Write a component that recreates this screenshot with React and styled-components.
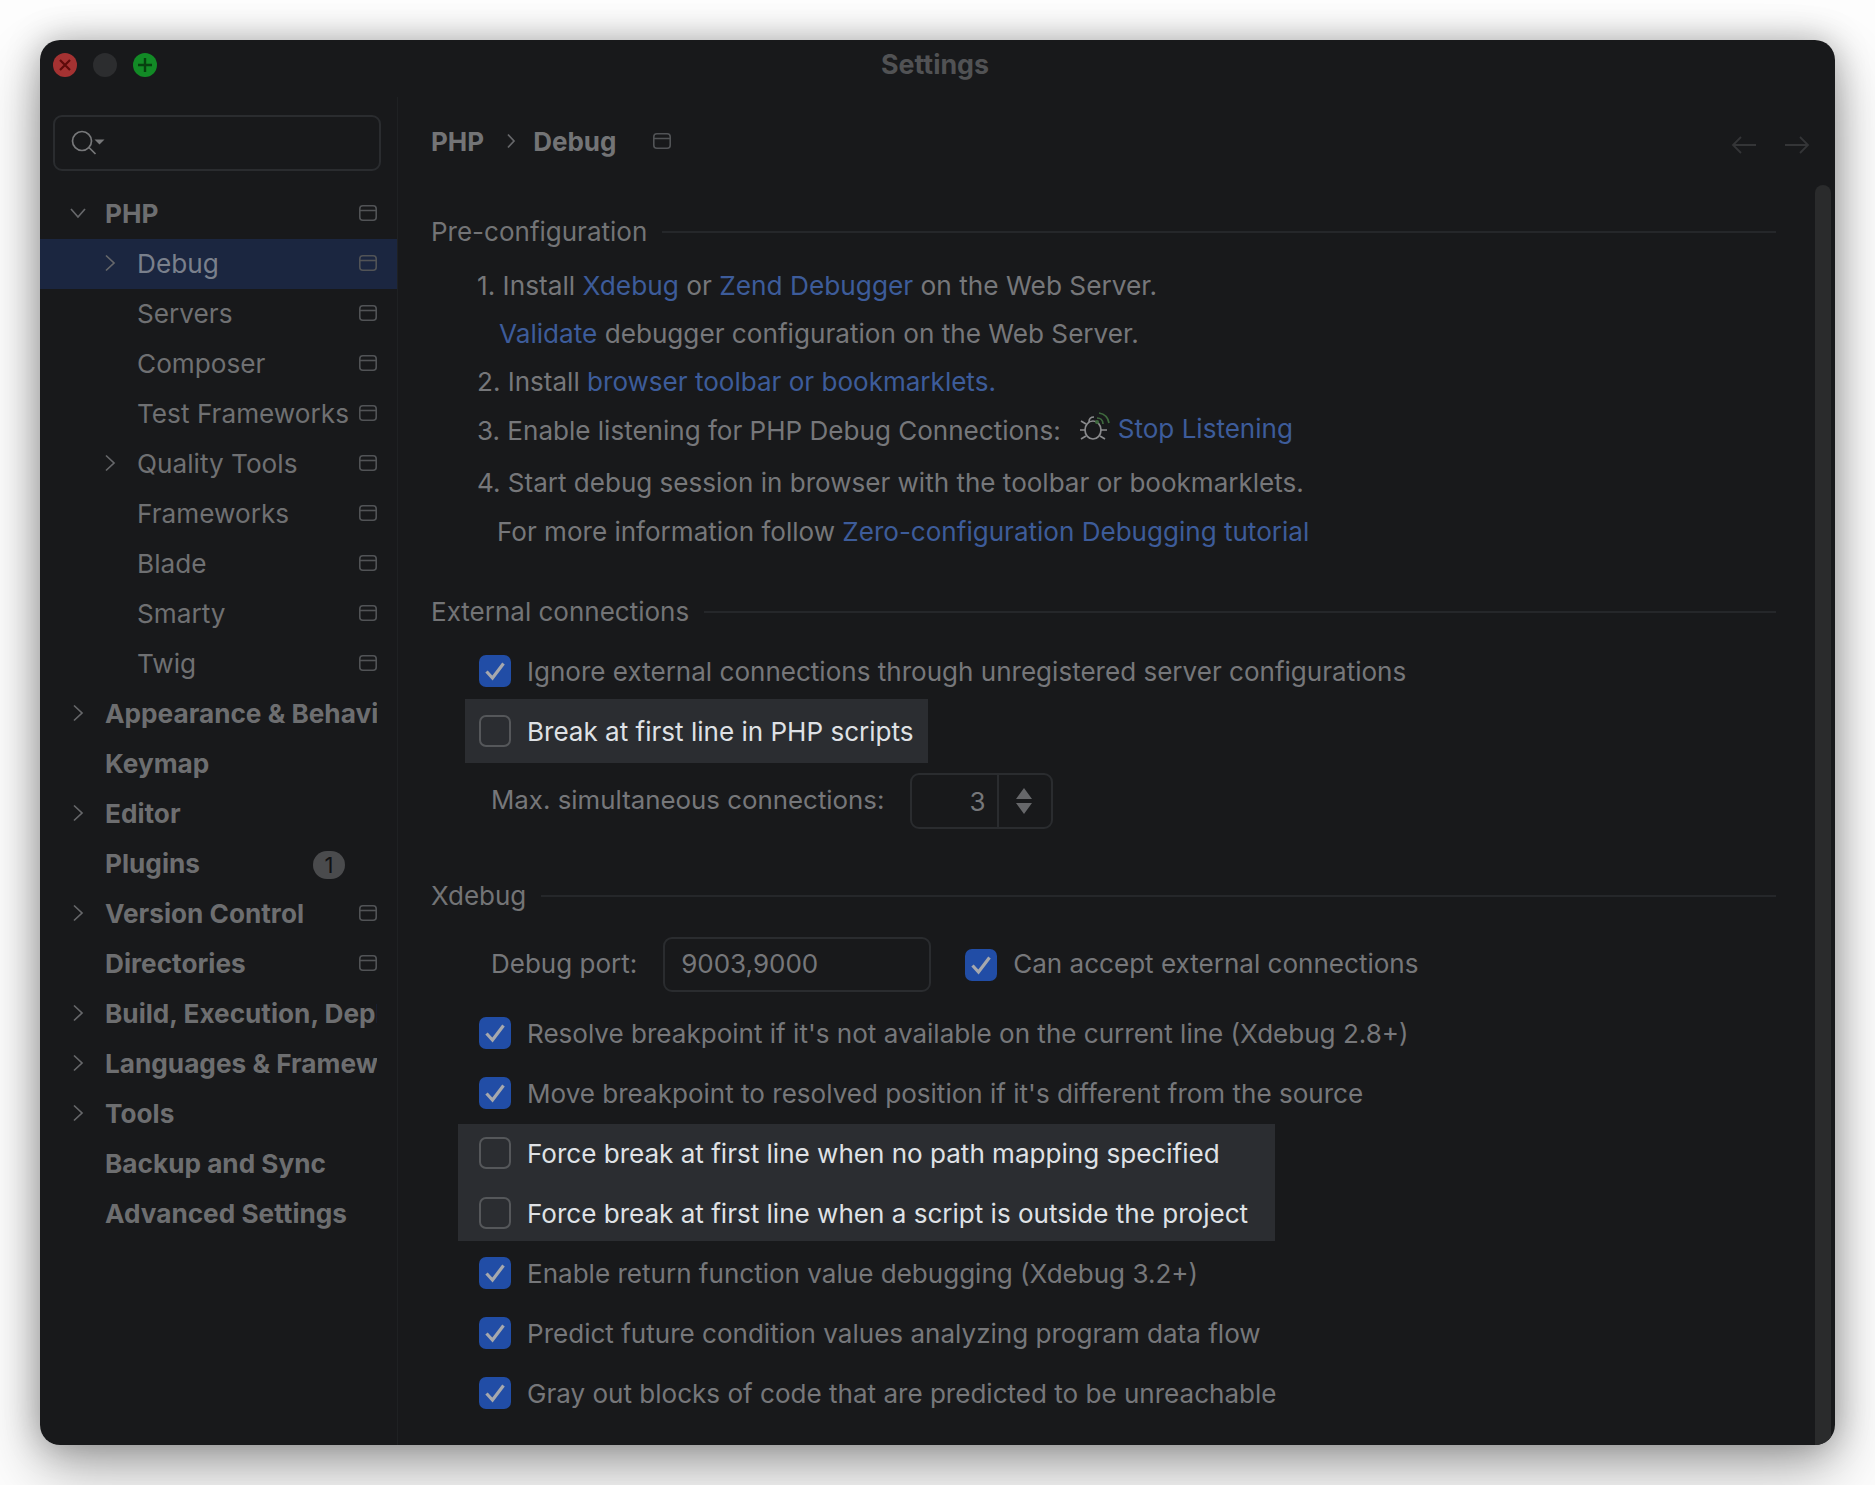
import React from 'react';
import styled, { createGlobalStyle } from 'styled-components';

const Global = createGlobalStyle`
  html, body { margin: 0; padding: 0; background: #fdfdfd; }
  body { font-family: Inter, "Liberation Sans", sans-serif; height: 1485px; overflow: hidden; }
  * { box-sizing: border-box; }
`;
const Page = styled.div`padding: 40px 40px 0;`;
const Window = styled.div`
  position: relative; width: 1795px; height: 1405px; display: flex; flex-direction: column;
  background: #18191b; border-radius: 20px; overflow: hidden;
`;
const Shadowed = styled.div`
  border-radius: 20px;
  box-shadow: 0 0 34px rgba(0,0,0,.28), 0 26px 60px rgba(0,0,0,.3);
`;
const TitleBar = styled.div`
  position: relative; height: 57px; padding: 0 13px 7px; display: flex; align-items: center; gap: 16px;
`;
const Light = styled.span`
  width: 24px; height: 24px; border-radius: 50%; background: ${p => p.$c}; display: flex; align-items: center; justify-content: center;
`;
const Title = styled.div`
  position: absolute; left: 0; right: 0; top: 0; height: 48px; display: flex; align-items: center; justify-content: center;
  font-size: 26.8px; font-weight: 700; color: #515254; padding-right: 5px;
`;
const Body = styled.div`flex: 1; display: flex; min-height: 0;`;
const Sidebar = styled.aside`
  width: 358px; border-right: 1px solid #1f2123; padding-top: 18px; display: flex; flex-direction: column;
`;
const Search = styled.div`
  height: 56px; margin: 0 16px 18px 13px; border: 2px solid #2a2c2f; border-radius: 9px; padding: 0 16px; display: flex; align-items: center;
`;
const Row = styled.div`
  height: 50px; display: flex; align-items: center; padding: 0 20px 2px ${p => p.$depth ? 60 : 28}px;
  background: ${p => p.$sel ? '#1b2640' : 'transparent'};
`;
const Arrow = styled.span`width: 20px; height: 20px; flex: none; display: flex; align-items: center; justify-content: center; margin-right: 17px; `;
const TreeLabel = styled.span`
  flex: 1; min-width: 0; white-space: nowrap; overflow: hidden; font-size: 26.2px;
  font-weight: ${p => p.$bold ? 700 : 400}; color: ${p => p.$sel ? '#7a808c' : p.$bold ? '#6d6e70' : '#6f7072'};
`;
const Badge = styled.span`
  width: 32px; height: 28px; border-radius: 14px; background: #4a4b4d; color: #111214; font-size: 22px; display: flex; align-items: center; justify-content: center; margin: 3px 32px 0 0; flex: none;
`;
const Main = styled.main`flex: 1; min-width: 0; position: relative; padding-left: 33px; padding-right: 59px;`;
const Scrollbar = styled.div`
  position: absolute; right: 4px; top: 88px; bottom: 0; width: 16px; background: #2a2b2c; border-radius: 8px 8px 0 0;
`;
const Header = styled.div`
  height: 88px; display: flex; align-items: center; margin-right: -34px;
`;
const Crumb = styled.span`font-size: 26px; font-weight: 700; color: #737476;`;
const CrumbSep = styled.span`display: flex; margin: 0 17px 0 22px;`;
const CrumbIcon = styled.span`display: flex; margin-left: 37px;`;
const Nav = styled.div`margin-left: auto; display: flex; gap: 27px; margin-top: 8px;`;
const SectionTitle = styled.div`
  height: 46px; margin-top: ${p => p.$mt}px; display: flex; align-items: center; gap: 15px; font-size: 26px; color: #737476;
  &::after { content: ''; flex: 1; height: 2px; background: #25272a; margin-top: 2px; }
`;
const Step = styled.div`
  height: ${p => p.$h}px; display: flex; align-items: center; padding-left: ${p => p.$indent}px; font-size: ${p => p.$fs || 26.05}px; color: #76777a; white-space: pre;
  margin-top: ${p => p.$mt || 0}px;
`;
const Link = styled.span`color: #3d5c9a;`;
const RaisedLink = styled(Link)`padding-bottom: 3px;`;
const BugWrap = styled.span`display: flex; margin: 0 7px 4px 18px;`;
const CheckRow = styled.div`
  height: ${p => p.$h || 60}px; display: flex; align-items: center; padding-left: ${p => p.$pad ?? 48}px; margin-top: ${p => p.$mt || 0}px;
`;
const Box = styled.span`
  width: 32px; height: 32px; border-radius: 7px; flex: none; display: flex; align-items: center; justify-content: center;
  background: ${p => p.$on ? '#214da6' : 'transparent'}; border: ${p => p.$on ? 'none' : '2px solid #55575a'};
`;
const CheckText = styled.span`
  margin-left: 16px; font-size: 26.06px; white-space: nowrap; color: ${p => p.$hi ? '#dfe1e5' : '#76777a'};
`;
const Highlight = styled.div`
  background: #2b2d31; margin-left: ${p => p.$ml}px; width: ${p => p.$w}px; margin-top: ${p => p.$mt || 0}px;
  display: flex; flex-direction: column; gap: ${p => p.$gap || 0}px;
`;
const FieldRow = styled.div`display: flex; align-items: center; padding-left: 60px; height: ${p => p.$h}px; margin-top: ${p => p.$mt}px;`;
const FieldLabel = styled.span`font-size: ${p => p.$fs || 26}px; color: #76777a; padding-bottom: 3px;`;
const Spinner = styled.div`
  width: 143px; height: 56px; margin-left: 26px; border: 2px solid #2a2c2f; border-radius: 9px; display: flex;
`;
const SpinValue = styled.div`
  width: 87px; border-right: 2px solid #2a2c2f; padding-right: 12px; display: flex; align-items: center; justify-content: flex-end; font-size: 26px; color: #76777a;
`;
const SpinBtns = styled.div`flex: 1; display: flex; flex-direction: column; align-items: center; justify-content: center; padding-right: 2px;`;
const Input = styled.div`
  width: 268px; height: 55px; margin-left: 26px; border: 2px solid #2a2c2f; border-radius: 9px; padding: 0 0 2px 16px; display: flex; align-items: center; font-size: 26px; color: #76777a;
`;
const Inline = styled.span`
  display: flex; align-items: center; margin-left: 34px;
  & > span:last-child { padding-bottom: 2px; }
`;

const WinIcon = () => (
  <svg width="18" height="16" viewBox="0 0 18 16" fill="none" style={{ flex: 'none' }}>
    <rect x=".8" y=".8" width="16.4" height="14.4" rx="3" stroke="#515356" strokeWidth="1.6" />
    <path d="M1 5.5h16" stroke="#515356" strokeWidth="1.6" />
  </svg>
);
const Chevron = ({ down, c = '#66676a' }) => (
  <svg width="20" height="20" viewBox="0 0 20 20" fill="none">
    <path d={down ? 'M3 6l7 8 7-8' : 'M6 2.5l8 7.5-8 7.5'} stroke={c} strokeWidth="1.7" />
  </svg>
);
const Check = () => (
  <svg width="24" height="24" viewBox="0 0 24 24" fill="none">
    <path d="M3.5 12.5l6 6.5L20.5 4.5" stroke="#a6a8ad" strokeWidth="3.2" />
  </svg>
);
const Tree = [
  ['PHP', 0, 'd', 1, 1], ['Debug', 1, 'r', 0, 1, 1], ['Servers', 1, '', 0, 1], ['Composer', 1, '', 0, 1],
  ['Test Frameworks', 1, '', 0, 1], ['Quality Tools', 1, 'r', 0, 1], ['Frameworks', 1, '', 0, 1], ['Blade', 1, '', 0, 1],
  ['Smarty', 1, '', 0, 1], ['Twig', 1, '', 0, 1], ['Appearance & Behavior', 0, 'r', 1], ['Keymap', 0, '', 1],
  ['Editor', 0, 'r', 1], ['Plugins', 0, '', 1, 0, 0, 1], ['Version Control', 0, 'r', 1, 1], ['Directories', 0, '', 1, 1],
  ['Build, Execution, Deployment', 0, 'r', 1], ['Languages & Frameworks', 0, 'r', 1], ['Tools', 0, 'r', 1],
  ['Backup and Sync', 0, '', 1], ['Advanced Settings', 0, '', 1],
];
const Opt = ({ on, hi, children }) => (
  <><Box $on={on}>{on && <Check />}</Box><CheckText $hi={hi}>{children}</CheckText></>
);

export default function App() {
  return (
    <Page>
      <Global />
      <Shadowed>
        <Window>
          <TitleBar>
            <Light $c="#a43232">
              <svg width="14" height="14" viewBox="0 0 14 14"><path d="M2 2l10 10M12 2L2 12" stroke="#5f0a0a" strokeWidth="2.2" /></svg>
            </Light>
            <Light $c="#2c2d2f" />
            <Light $c="#128a26">
              <svg width="16" height="16" viewBox="0 0 16 16"><path d="M8 1v14M1 8h14" stroke="#07400f" strokeWidth="2.4" /></svg>
            </Light>
            <Title>Settings</Title>
          </TitleBar>
          <Body>
            <Sidebar>
              <Search>
                <svg width="36" height="28" viewBox="0 0 36 28" fill="none">
                  <circle cx="11" cy="12" r="9.5" stroke="#77787a" strokeWidth="1.7" />
                  <path d="M18 18.5l6.5 6.5" stroke="#77787a" strokeWidth="1.7" />
                  <path d="M23.5 10.5h10l-5 5z" fill="#77787a" />
                </svg>
              </Search>
              {Tree.map(([t, depth, arrow, bold, win, sel, badge]) => (
                <Row key={t} $depth={depth} $sel={sel}>
                  <Arrow>{arrow && <Chevron down={arrow === 'd'} />}</Arrow>
                  <TreeLabel $bold={bold} $sel={sel}>{t}</TreeLabel>
                  {!!badge && <Badge>1</Badge>}
                  {!!win && <WinIcon />}
                </Row>
              ))}
            </Sidebar>
            <Main>
              <Scrollbar />
              <Header>
                <Crumb>PHP</Crumb>
                <CrumbSep>
                  <svg width="10" height="16" viewBox="0 0 10 16" fill="none"><path d="M2 1.5l6 6.5-6 6.5" stroke="#66676a" strokeWidth="1.7" /></svg>
                </CrumbSep>
                <Crumb>Debug</Crumb>
                <CrumbIcon><WinIcon /></CrumbIcon>
                <Nav>
                  <svg width="26" height="20" viewBox="0 0 26 20" fill="none"><path d="M25 10H2M10 2l-8 8 8 8" stroke="#343537" strokeWidth="1.8" /></svg>
                  <svg width="26" height="20" viewBox="0 0 26 20" fill="none"><path d="M1 10h23M16 2l8 8-8 8" stroke="#343537" strokeWidth="1.8" /></svg>
                </Nav>
              </Header>
              <SectionTitle $mt={23}>Pre-configuration</SectionTitle>
              <Step $h={48} $mt={7} $indent={46} $fs={26.25}>1. Install <Link>Xdebug</Link> or <Link>Zend Debugger</Link> on the Web Server.</Step>
              <Step $h={48} $indent={68} $fs={26.15}><Link>Validate</Link> debugger configuration on the Web Server.</Step>
              <Step $h={48} $indent={46}>2. Install <Link>browser toolbar or bookmarklets.</Link></Step>
              <Step $h={50} $indent={46}>3. Enable listening for PHP Debug Connections:
                <BugWrap>
                  <svg width="32" height="32" viewBox="0 0 32 32" fill="none">
                    <ellipse cx="14" cy="18" rx="8" ry="9" stroke="#8a8b8d" strokeWidth="1.7" />
                    <path d="M10 10c0-3 2-5 5-5M6 18H1M22 18h6M7 24l-5 3M21 24l5 3M7 12L2 9" stroke="#8a8b8d" strokeWidth="1.7" />
                    <path d="M18 6c3 0 6 2 6 6M20 1c6 1 9 4 10 10" stroke="#3f6a3e" strokeWidth="1.7" />
                    <circle cx="18" cy="10" r="2" fill="#3f6a3e" />
                  </svg>
                </BugWrap>
                <RaisedLink>Stop Listening</RaisedLink>
              </Step>
              <Step $h={55} $indent={46}>4. Start debug session in browser with the toolbar or bookmarklets.</Step>
              <Step $h={42} $indent={66}>For more information follow <Link>Zero-configuration Debugging tutorial</Link></Step>

              <SectionTitle $mt={36}>External connections</SectionTitle>
              <CheckRow $h={56} $mt={9}><Opt on>Ignore external connections through unregistered server configurations</Opt></CheckRow>
              <Highlight $ml={34} $w={463}>
                <CheckRow $h={64} $pad={14}><Opt hi>Break at first line in PHP scripts</Opt></CheckRow>
              </Highlight>
              <FieldRow $h={56} $mt={10}>
                <FieldLabel $fs={25.85}>Max. simultaneous connections:</FieldLabel>
                <Spinner>
                  <SpinValue>3</SpinValue>
                  <SpinBtns>
                    <svg width="18" height="28" viewBox="0 0 18 28"><path d="M9 1l8 11H1z M1 16h16l-8 11z" fill="#66676a" /></svg>
                  </SpinBtns>
                </Spinner>
              </FieldRow>
              <SectionTitle $mt={43}>Xdebug</SectionTitle>
              <FieldRow $h={55} $mt={19}>
                <FieldLabel>Debug port:</FieldLabel>
                <Input>9003,9000</Input>
                <Inline><Opt on>Can accept external connections</Opt></Inline>
              </FieldRow>
              <CheckRow $mt={11}><Opt on>Resolve breakpoint if it's not available on the current line (Xdebug 2.8+)</Opt></CheckRow>
              <CheckRow><Opt on>Move breakpoint to resolved position if it's different from the source</Opt></CheckRow>
              <Highlight $ml={27} $w={817} $gap={3} $mt={1}>
                <CheckRow $h={58} $pad={21}><Opt hi>Force break at first line when no path mapping specified</Opt></CheckRow>
                <CheckRow $h={56} $pad={21}><Opt hi>Force break at first line when a script is outside the project</Opt></CheckRow>
              </Highlight>
              <CheckRow $mt={2}><Opt on>Enable return function value debugging (Xdebug 3.2+)</Opt></CheckRow>
              <CheckRow><Opt on>Predict future condition values analyzing program data flow</Opt></CheckRow>
              <CheckRow><Opt on>Gray out blocks of code that are predicted to be unreachable</Opt></CheckRow>
            </Main>
          </Body>
        </Window>
      </Shadowed>
    </Page>
  );
}
